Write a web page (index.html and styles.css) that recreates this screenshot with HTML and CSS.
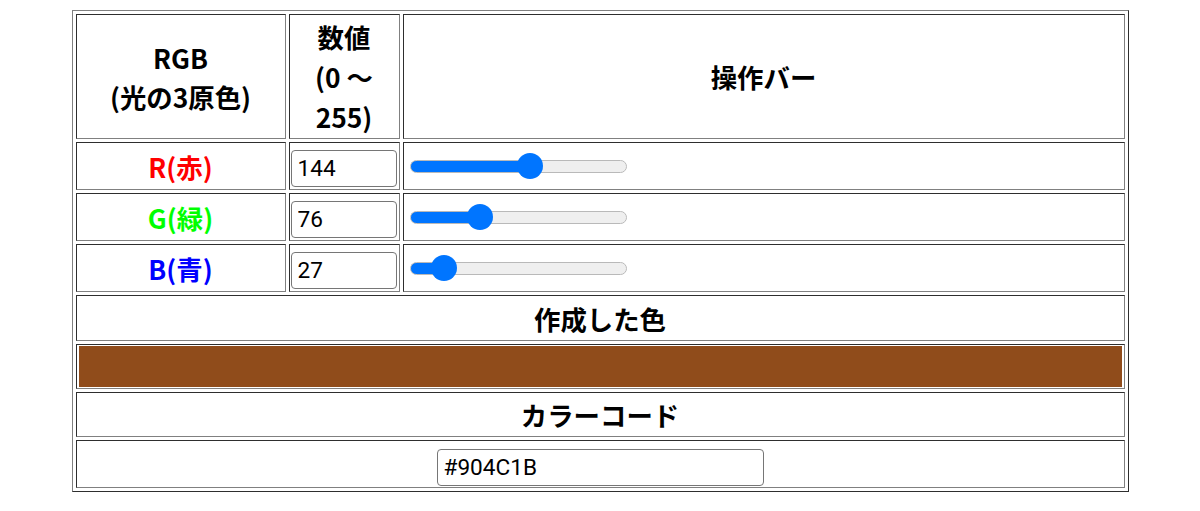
FILE: index.html
```html
<!DOCTYPE html>
<html lang="ja">
<head>
<meta charset="utf-8">
<title>RGB</title>
<link rel="stylesheet" href="styles.css">
</head>
<body>
<table class="rgb">
  <tbody>
    <tr class="row-head">
      <th class="c1 head-rgb">RGB<br>(光の3原色)</th>
      <th class="c2 head-num">数値<br>(0 〜 255)</th>
      <th class="c3">操作バー</th>
    </tr>
    <tr class="row-ch">
      <th class="label red">R(赤)</th>
      <td class="num"><input class="num-input" type="number" value="144" min="0" max="255"></td>
      <td class="bar"><input class="slider" type="range" min="0" max="255" value="144" style="--fill:120.7px"></td>
    </tr>
    <tr class="row-ch">
      <th class="label green">G(緑)</th>
      <td class="num"><input class="num-input" type="number" value="76" min="0" max="255"></td>
      <td class="bar"><input class="slider" type="range" min="0" max="255" value="76" style="--fill:70.3px"></td>
    </tr>
    <tr class="row-ch">
      <th class="label blue">B(青)</th>
      <td class="num"><input class="num-input" type="number" value="27" min="0" max="255"></td>
      <td class="bar"><input class="slider" type="range" min="0" max="255" value="27" style="--fill:34px"></td>
    </tr>
    <tr class="row-title">
      <th colspan="3">作成した色</th>
    </tr>
    <tr class="row-swatch">
      <td colspan="3" class="swatch-cell"><div class="swatch" style="background:#904C1B"></div></td>
    </tr>
    <tr class="row-code-title">
      <th colspan="3">カラーコード</th>
    </tr>
    <tr class="row-code">
      <td colspan="3" class="code-cell"><input class="code-input" type="text" value="#904C1B"></td>
    </tr>
  </tbody>
</table>
</body>
</html>
```

FILE: styles.css
```css
html, body {
  margin: 0;
  padding: 0;
  background: #ffffff;
}

body {
  font-family: "Noto Sans CJK JP", "Noto Sans", sans-serif;
  color: #000;
}

.rgb {
  width: 1057px;
  margin: 10px auto 0;
  table-layout: fixed;
  border-collapse: separate;
  border-spacing: 3px;
  border: 1px solid;
  border-color: #808080 #2e2e2e #2e2e2e #808080;
}

.rgb th,
.rgb td {
  box-sizing: border-box;
  border: 1px solid;
  border-color: #2e2e2e #808080 #808080 #2e2e2e;
  padding: 1px;
  vertical-align: middle;
  text-align: center;
  font-size: 26.4px;
  font-weight: bold;
}

.rgb td {
  font-weight: normal;
}

.rgb .c1 { width: 210px; }
.rgb .c2 { width: 111px; }
.rgb .c3 { width: 722px; }

.row-head { height: 125px; }
.row-ch { height: 48px; }
.row-title { height: 46px; }
.row-swatch { height: 45px; }
.row-code-title { height: 45px; }
.row-code { height: 48px; }

.rgb .head-rgb {
  line-height: 39px;
}

.rgb .head-num {
  line-height: 40px;
}

.rgb .label { line-height: normal; }
.rgb .red { color: #ff0000; }
.rgb .green { color: #00ff00; }
.rgb .blue { color: #0000ff; }

.rgb .num {
  vertical-align: bottom;
}

.num-input,
.code-input {
  display: block;
  box-sizing: border-box;
  height: 37px;
  margin: 0;
  padding: 0 6px;
  border: 1px solid #767676;
  border-radius: 4px;
  background: #fff;
  font-family: Roboto, "Noto Sans", sans-serif;
  font-size: 22.6px;
  color: #000;
  text-align: left;
}

.num-input {
  width: 106px;
  margin-bottom: 1px;
  -moz-appearance: textfield;
}

.num-input::-webkit-inner-spin-button,
.num-input::-webkit-outer-spin-button {
  -webkit-appearance: none;
  margin: 0;
}

.rgb .bar {
  text-align: left;
}

.slider {
  -webkit-appearance: none;
  appearance: none;
  display: block;
  box-sizing: border-box;
  width: 217px;
  height: 13px;
  margin: 0 0 0 5px;
  padding: 0;
  border: 1px solid #b9b9b9;
  border-radius: 7px;
  background:
    linear-gradient(to right, #0075ff var(--fill), transparent var(--fill)) border-box,
    #efefef padding-box;
}

.slider::-webkit-slider-thumb {
  -webkit-appearance: none;
  appearance: none;
  width: 26px;
  height: 26px;
  border: none;
  border-radius: 50%;
  background: #0075ff;
}

.rgb .swatch-cell {
  padding: 1px 2px;
}

.swatch {
  height: 41px;
}

.rgb .code-cell {
  vertical-align: bottom;
}

.code-input {
  width: 327px;
  margin: 0 auto;
}
```
